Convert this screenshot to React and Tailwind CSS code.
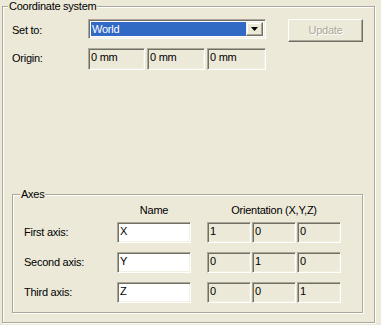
import React from "react";

// sunken read-only edit box (classic XP look)
const Field = ({ value, w, h = "h-[21px]", white = false }) => (
  <div
    className={`${w} ${h} ${
      white ? "bg-white" : "bg-[#ece9d8]"
    } border border-[#aca899] border-r-white border-b-white shadow-[inset_1px_1px_0_#716f64,inset_-1px_-1px_0_#f1efe2] pl-[2px] pt-[2px] leading-[13px] text-black`}
  >
    {value}
  </div>
);

const axes = [
  { label: "First axis:", name: "X", dir: ["1", "0", "0"] },
  { label: "Second axis:", name: "Y", dir: ["0", "1", "0"] },
  { label: "Third axis:", name: "Z", dir: ["0", "0", "1"] },
];

const App = () => {
  return (
    <div className="w-[381px] h-[325px] bg-[#ece9d8] overflow-hidden font-['Liberation_Sans',Arial,sans-serif] text-[11px] leading-[13px] tracking-[-0.25px] text-black">
      <fieldset className="ml-[2px] w-[373px] h-[323px] p-0 m-0 border border-[#aca899] shadow-[1px_1px_0_#fff,inset_1px_1px_0_#fff]">
        <legend className="ml-[5px] px-[1px] bg-[#ece9d8]">Coordinate system</legend>

        <div className="pl-[9px] pt-[6px] flex flex-col">
          {/* Set to row */}
          <div className="flex items-start">
            <div className="w-[76px] pt-[5px]">Set to:</div>
            <div className="w-[178px] h-[20px] bg-white border border-[#aca899] border-r-white border-b-white shadow-[inset_1px_1px_0_#716f64,inset_-1px_-1px_0_#f1efe2] p-[2px] flex items-stretch">
              <div className="flex-1 bg-[#316ac5] text-white pl-[1px] leading-[14px]">World</div>
              <div className="w-[17px] bg-[#ece9d8] border border-[#f1efe2] border-r-[#716f64] border-b-[#716f64] shadow-[inset_-1px_-1px_0_#aca899,inset_1px_1px_0_#fff] flex items-center justify-center">
                <svg width="7" height="4" viewBox="0 0 7 4">
                  <path d="M0 0h7L3.5 4z" fill="#000" />
                </svg>
              </div>
            </div>
            <div className="ml-[22px] w-[75px] h-[23px] border border-white border-r-[#716f64] border-b-[#716f64] shadow-[inset_-1px_-1px_0_#aca899] flex items-center justify-center text-[#aca899] [text-shadow:1px_1px_0_#fff]">
              Update
            </div>
          </div>

          {/* Origin row */}
          <div className="flex items-start mt-[6px]">
            <div className="w-[76px] pt-[4px]">Origin:</div>
            <div className="flex gap-[2px]">
              <Field value="0 mm" w="w-[57px]" h="h-[22px]" />
              <Field value="0 mm" w="w-[58px]" h="h-[22px]" />
              <Field value="0 mm" w="w-[59px]" h="h-[22px]" />
            </div>
          </div>

          {/* Axes group */}
          <fieldset className="mt-[118px] w-[351px] h-[125px] p-0 m-0 border border-[#aca899] shadow-[1px_1px_0_#fff,inset_1px_1px_0_#fff]">
            <legend className="ml-[7px] px-[1px] bg-[#ece9d8]">Axes</legend>
            <div className="pt-[3px] flex flex-col">
              <div className="flex">
                <div className="w-[104px]" />
                <div className="w-[74px] text-center">Name</div>
                <div className="w-[134px] ml-[16px] text-center">Orientation (X,Y,Z)</div>
              </div>
              <div className="flex flex-col gap-[9px] mt-[5px]">
                {axes.map((a) => (
                  <div key={a.name} className="flex items-center">
                    <div className="w-[104px] pl-[11px]">{a.label}</div>
                    <Field value={a.name} w="w-[74px]" white />
                    <div className="ml-[16px] flex gap-[1px]">
                      {a.dir.map((d, i) => (
                        <Field key={i} value={d} w="w-[44px]" />
                      ))}
                    </div>
                  </div>
                ))}
              </div>
            </div>
          </fieldset>
        </div>
      </fieldset>
    </div>
  );
};

export default App;
